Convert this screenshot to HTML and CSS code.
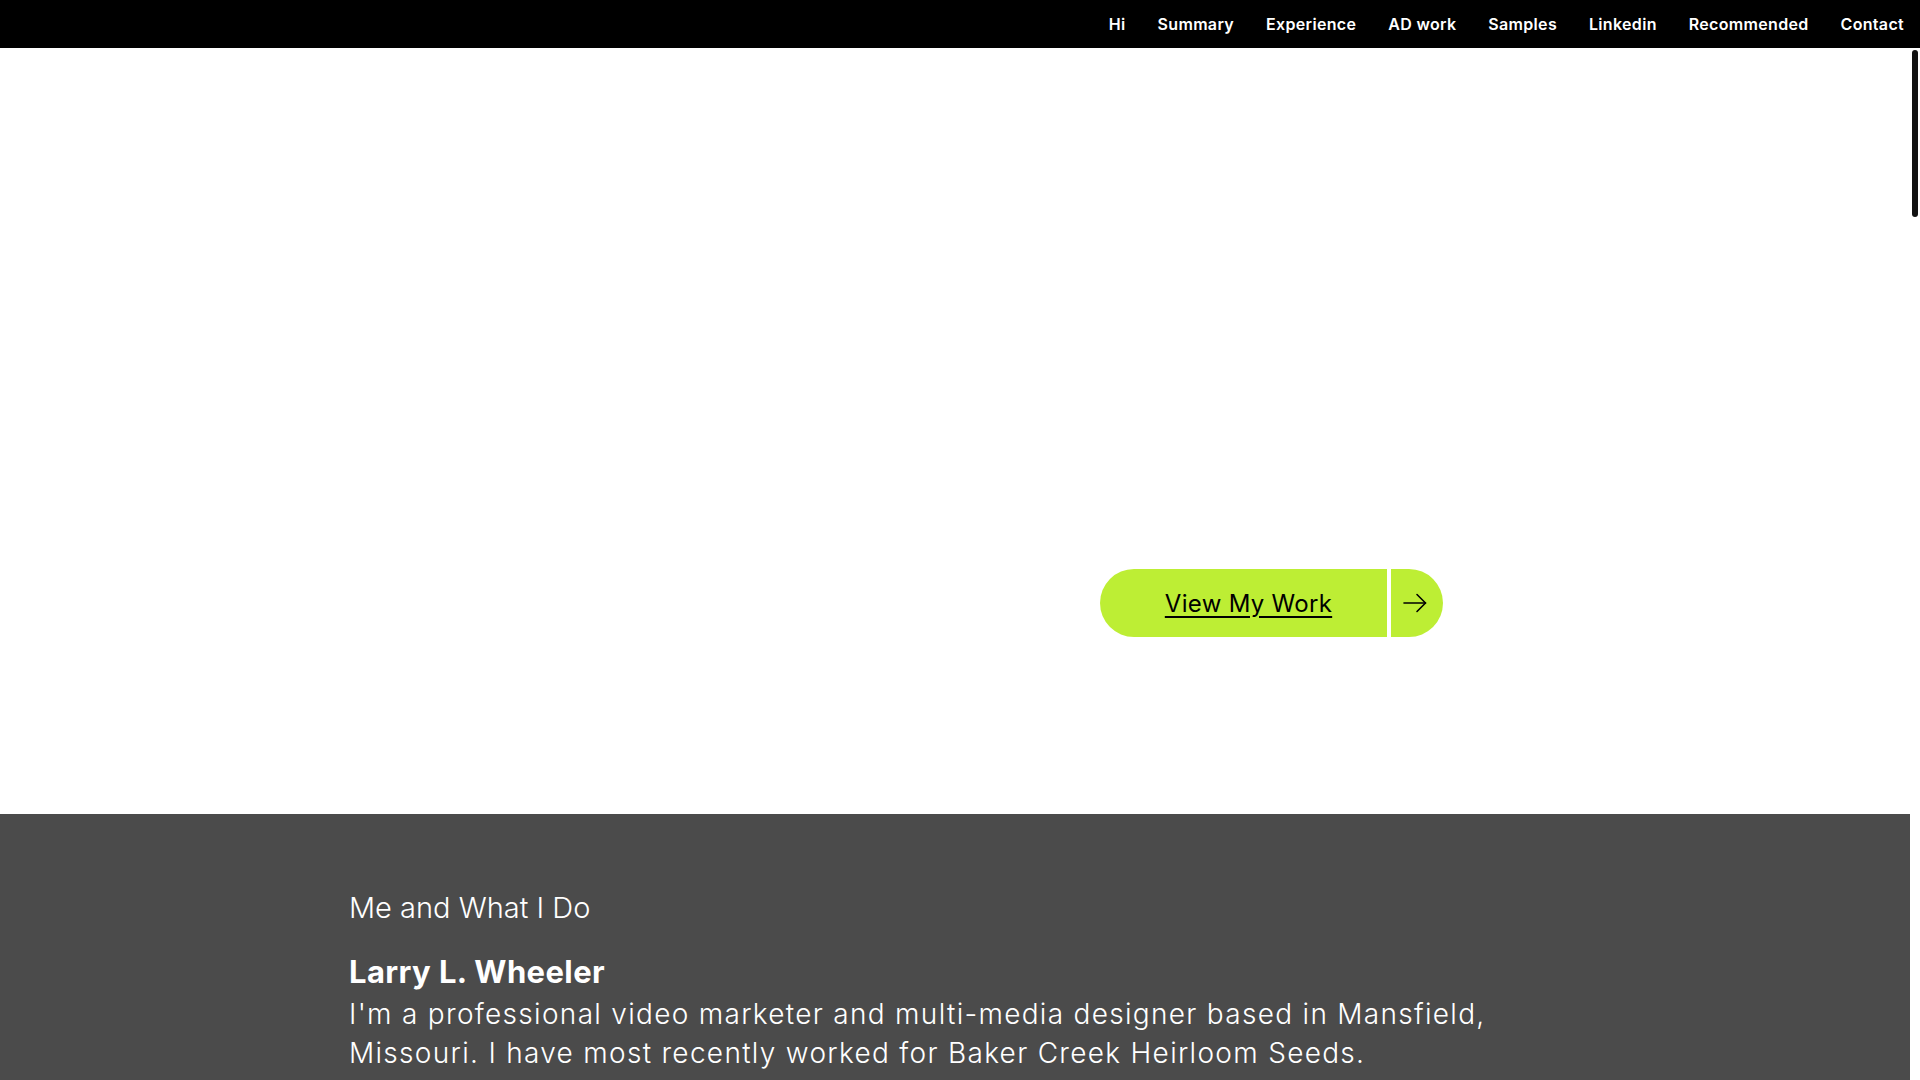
FILE: index.html
```html
<!DOCTYPE html>
<html lang="en">
<head>
<meta charset="utf-8">
<title>Larry L. Wheeler</title>
<link rel="stylesheet" href="styles.css">
</head>
<body>
<div class="page">
  <nav class="nav">
    <a href="#">Hi</a>
    <a href="#">Summary</a>
    <a href="#">Experience</a>
    <a href="#">AD work</a>
    <a href="#">Samples</a>
    <a href="#">Linkedin</a>
    <a href="#">Recommended</a>
    <a href="#">Contact</a>
  </nav>
  <div class="row">
    <main class="main">
      <section class="hero">
        <div class="cta">
          <a class="cta-main" href="#">View My Work</a>
          <a class="cta-arrow" href="#" aria-label="View My Work">
            <svg width="24" height="20" viewBox="0 0 24 20" fill="none" stroke="#000" stroke-width="1.6" stroke-linecap="round" stroke-linejoin="round"><path d="M1 10H22.5"/><path d="M14 1.5L22.5 10L14 18.5"/></svg>
          </a>
        </div>
      </section>
      <section class="about">
        <div class="about-inner">
          <h2 class="kicker">Me and What I Do</h2>
          <h3 class="name">Larry L. Wheeler</h3>
          <p class="bio">I'm a professional video marketer and multi-media designer based in Mansfield, Missouri. I have most recently worked for Baker Creek Heirloom Seeds.</p>
        </div>
      </section>
    </main>
    <div class="scrollbar"><div class="thumb"></div></div>
  </div>
</div>
</body>
</html>
```
FILE: styles.css
```css
html, body {
  margin: 0;
  padding: 0;
  height: 100%;
  overflow: hidden;
}
body {
  font-family: Inter, "Liberation Sans", sans-serif;
  background: #fff;
}
.page {
  display: flex;
  flex-direction: column;
  height: 100vh;
}
.nav {
  height: 48px;
  flex: none;
  background: #000;
  display: flex;
  justify-content: flex-end;
  align-items: center;
  gap: 32px;
  padding-right: 16px;
}
.nav a {
  color: #fff;
  text-decoration: none;
  font-size: 16px;
  font-weight: 600;
  letter-spacing: 0.32px;
}
.row {
  flex: 1;
  display: flex;
  min-height: 0;
}
.main {
  flex: 1;
  display: flex;
  flex-direction: column;
}
.hero {
  height: 766px;
  flex: none;
  background: #fff;
  box-sizing: border-box;
  padding: 521px 0 0 1100px;
}
.cta {
  display: flex;
  gap: 4px;
  height: 68px;
}
.cta-main {
  width: 287px;
  height: 68px;
  border-radius: 34px 0 0 34px;
  background: #bdee34;
  display: flex;
  align-items: center;
  justify-content: center;
  padding-left: 10px;
  box-sizing: border-box;
  color: #000;
  font-size: 24px;
  font-weight: 400;
  letter-spacing: 0.3px;
  text-decoration: underline;
  text-decoration-thickness: 2px;
  text-underline-offset: 4px;
}
.cta-arrow {
  width: 52px;
  height: 68px;
  border-radius: 0 34px 34px 0;
  background: #bdee34;
  display: flex;
  align-items: center;
  justify-content: flex-start;
  padding-left: 12px;
  box-sizing: border-box;
}
.about {
  flex: 1;
  background: #4b4b4b;
  color: #fff;
  padding-top: 76px;
}
.about-inner {
  width: 1212px;
  margin: 0 auto;
}
.kicker {
  margin: 0;
  font-size: 29px;
  font-weight: 300;
  line-height: 35px;
}
.name {
  margin: 28px 0 0;
  font-size: 31px;
  font-weight: 700;
  line-height: 38px;
  letter-spacing: 0.4px;
}
.bio {
  margin: 4px 0 0;
  font-size: 28px;
  font-weight: 300;
  line-height: 39px;
  letter-spacing: 1.3px;
  max-width: 1195px;
}
.scrollbar {
  width: 10px;
  flex: none;
  background: #fff;
  padding-top: 2px;
  box-sizing: border-box;
}
.thumb {
  width: 6px;
  height: 167px;
  margin-left: 2px;
  border-radius: 3px;
  background: #111;
}
```
